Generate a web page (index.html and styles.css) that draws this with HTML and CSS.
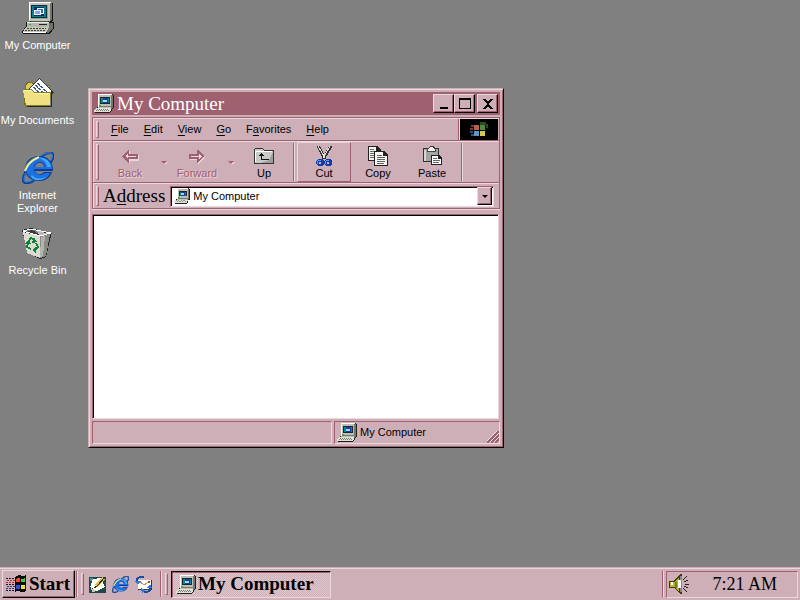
FILE: index.html
```html
<!DOCTYPE html>
<html lang="en">
<head>
<meta charset="utf-8">
<title>My Computer</title>
<meta name="viewport" content="width=device-width, initial-scale=1">
<link rel="stylesheet" href="styles.css">
</head>
<body>
<svg class="defs" aria-hidden="true">
  <symbol id="computer" viewBox="0 0 32 32">
    <path fill="#151714" d="M28 1h3v17l-2 2h3v6l-4 6H1l-1-2 4-6v-4h4v-1z"/>
    <path fill="#6f736b" d="M27 1h3v16l-3 3zM27 21h4v5l-4 5h-2z"/>
    <path fill="#c4c5bb" d="M7 0h21v19H7z"/>
    <path fill="#fff" d="M7 0h22v1H8v17H7z"/>
    <path fill="#9da097" d="M9 3h17v14H9z"/>
    <path fill="#062c38" d="M9 3h16v13H9z"/>
    <path fill="#0c7f88" d="M10 4h14v11H10z"/>
    <path fill="#0b2d6c" d="M12 5h10v9H12z"/>
    <path fill="#f3f6ff" d="M15 6h7v6h-7z"/>
    <path fill="#3c65c0" d="M16 7h5v4h-5z"/>
    <path fill="#f3f6ff" d="M12 8h7v5h-7z"/>
    <path fill="#7ba6e6" d="M13 9h5v3h-5z"/>
    <path fill="#4d514a" d="M9 19h17v1H9z"/>
    <path fill="#b4b6ac" d="M5 20h22v5H5z"/>
    <path fill="#eceee4" d="M5 20h22v1H5z"/>
    <path fill="#18b84a" d="M7 22h2v1H7z"/>
    <path fill="#222" d="M17 22h8v1h-8z"/>
    <path fill="#c8c9be" d="M4 25h23l-3 6H1v-1z"/>
    <path stroke="#3e423b" stroke-dasharray="2 1" d="M5 26.5h19M3 28.5h20"/>
    <path stroke="#fff" d="M1 30.5h23"/>
  </symbol>
  <symbol id="computer-small" viewBox="0 0 20 19">
    <path fill="#1d201b" d="M18 0h1l1 2v12l-2 1v1l-2 3H1l-1-1v-2l3-3z"/>
    <path fill="#73776e" d="M17 1h2v12l-2 2z"/>
    <path fill="#bdbfb4" d="M4 0h13v14H4z"/>
    <path fill="#fff" d="M4 0h14v1H5v12H4z"/>
    <path fill="#20252b" d="M6 3h10v7H6z"/>
    <path fill="#0a8790" d="M7 4h8v5H7z"/>
    <path fill="#173d9f" d="M9 4h5v5H9z"/>
    <path fill="#9edcf2" d="M9 6h4v2H9z"/>
    <path fill="#777b73" d="M5 12h12v1H5z"/>
    <path fill="#22b64e" d="M5 11h2v1H5z"/>
    <path fill="#e2e3d8" d="M2 14h15v2l-1 2H0v-2z"/>
    <path stroke="#777b72" stroke-dasharray="1 1" d="M3 15.5h12M2 16.5h13"/>
  </symbol>
  <symbol id="documents" viewBox="0 0 32 32">
    <path fill="#746f1b" d="M3 8l2-3h6l2 3h15v22H5l-3-2z"/>
    <path fill="#d6cd5a" d="M4 8l2-2h4l2 3h15v7H4z"/>
    <path fill="#303733" d="M7 12L17 1l15 14-8 10z"/>
    <path fill="#fff" d="M7 12L17 2l13 13-6 9z"/>
    <path fill="none" stroke="#315b95" stroke-width="1.5" stroke-dasharray="3 1" d="M12 10l6 7M14 8l8 9M16 6l9 10"/>
    <path fill="#26291d" d="M29 14h1v16H5v-1h24z"/>
    <path fill="#807c27" d="M1 12h9l2 3h17l-1 14H4z"/>
    <path fill="#eee17e" d="M1 13h9l2 3h16v12H4z"/>
    <path fill="#fff7ad" d="M1 13h9v1H2zM12 16h15v1H12z"/>
    <path stroke="#ffd8a0" stroke-dasharray="1 2" d="M5 17.5h20M6 19.5h20M5 21.5h20M6 23.5h20M6 25.5h20"/>
  </symbol>
  <symbol id="explorer" viewBox="0 0 32 32">
    <g shape-rendering="auto">
    <path fill="none" stroke="#0f3f98" stroke-width="2.5" d="M20 4C25 0 33-1 31 6c-1 3-3 5-5 6M6 16C0 25 0 31 4 31c3 0 6-1 8-3"/>
    <path fill="none" stroke="#328ce9" stroke-width="1" d="M20 3C25 0 32-1 30 6c-1 3-3 5-5 6M6 17C1 25 1 30 4 30c3 0 6-1 8-3"/>
    <path fill="#0b3a98" fill-rule="evenodd" d="M3 17C3 9 9 4 17 4c9 0 14 6 14 15H13c1 4 7 4 9 1h8c-2 6-7 9-13 9C9 29 3 24 3 17zM13 15h9c0-5-8-6-9 0z"/>
    <path fill="#1b70e2" fill-rule="evenodd" d="M4 17C4 10 10 5 17 5c8 0 13 5 13 12H12c0 6 8 7 11 4h5c-2 5-6 7-11 7C10 28 4 24 4 17zM12 15h11c-1-7-10-6-11 0z"/>
    <path fill="#3fa9fc" d="M17 6c6-1 11 3 12 9h-4c0-4-3-7-8-9zM10 23c4 5 11 4 15 1-4 5-12 6-16 1z"/>
    <path fill="none" stroke="#ecebb5" stroke-width="2" d="M17 5C10 8 5 13 3 19"/>
    <path fill="none" stroke="#848b37" d="M14 5C7 8 3 13 1 20"/>
    </g>
  </symbol>
  <symbol id="recycle" viewBox="0 0 32 32">
    <path fill="#252525" d="M0 3l9-2 21 5-1 3-5 21-6 2-12-6z"/>
    <path fill="#777" d="M2 4l7-2 19 5-11 3z"/>
    <path fill="#3a3a3a" d="M5 4l5-1 9 5-3 1z"/>
    <path fill="#bbb" d="M14 3l13 4-9 2z"/>
    <path fill="#dadbd5" d="M1 5l17 4v22L5 26z"/>
    <path fill="#898b84" d="M18 9l10-2-4 22-6 2z"/>
    <path fill="#b3b4ad" d="M19 10l4-1-2 20-3 1z"/>
    <path fill="none" stroke="#fff" stroke-width="1" d="M1 4l17 5 11-3M1 4l8-2 20 4"/>
    <path fill="none" stroke="#138034" stroke-width="2" d="M6 15l3-4 4 2M14 16l2 4-3 3M9 22l-4-2 1-4"/>
    <path fill="#138034" d="M12 10l3 5-5 1zM14 19v7l-4-3zM3 17l3-4 3 4z"/>
  </symbol>
  <symbol id="flag" viewBox="0 0 22 18">
    <path fill="#0b0b0b" d="M10 2q4-3 7-1 2 1 4-1v16q-4 2-7 0-2-1-4 1z"/>
    <path fill="#f04434" d="M11 4q2-2 4-1v4q-2-1-4 0z"/>
    <path fill="#48c83b" d="M16 4q2 1 4-1v4q-2 1-4 0z"/>
    <path fill="#2a50e0" d="M11 10q2-1 4 0v4q-2-1-4 0z"/>
    <path fill="#f3de35" d="M16 10q2 1 4 0v4q-2 1-4 0z"/>
    <path stroke="#171717" stroke-width="1" stroke-dasharray="2 1" d="M1 3.5h9M1 9.5h9M1 15.5h9"/>
    <path stroke="#b3282f" stroke-dasharray="2 1" d="M2 5.5h8M1 7.5h9"/>
    <path stroke="#26328c" stroke-dasharray="2 1" d="M2 11.5h8M1 13.5h9"/>
  </symbol>
</svg>

<main class="desktop">
  <nav class="shortcuts" aria-label="Desktop">
    <a class="shortcut" href="#computer"><svg class="icon32"><use href="#computer"/></svg><span>My Computer</span></a>
    <a class="shortcut" href="#documents"><svg class="icon32"><use href="#documents"/></svg><span>My Documents</span></a>
    <a class="shortcut" href="#explorer"><svg class="icon32"><use href="#explorer"/></svg><span>Internet<br>Explorer</span></a>
    <a class="shortcut" href="#recycle"><svg class="icon32"><use href="#recycle"/></svg><span>Recycle Bin</span></a>
  </nav>

  <section class="window" aria-labelledby="window-title">
    <header class="titlebar">
      <svg class="icon-small"><use href="#computer-small"/></svg>
      <h1 id="window-title">My Computer</h1>
      <div class="controls">
        <button class="control" aria-label="Minimize"><svg viewBox="0 0 16 14"><path d="M4 10h8v2H4z"/></svg></button>
        <button class="control" aria-label="Maximize"><svg viewBox="0 0 16 14"><path fill-rule="evenodd" d="M2 1h12v11H2zM3 3v8h10V3z"/></svg></button>
        <button class="control close" aria-label="Close"><svg viewBox="0 0 16 14"><path d="M3 2h3v1h1v1h2V3h1V2h3v1h-1v1h-1v1h-1v1H9v2h1v1h1v1h1v1h1v1h-3v-1H9v-1H7v1H6v1H3v-1h1v-1h1V9h1V8h1V6H6V5H5V4H4V3H3z"/></svg></button>
      </div>
    </header>

    <div class="rebar">
      <div class="band menu-band">
        <span class="grip"></span>
        <nav class="menu" aria-label="Menu">
          <button><u>F</u>ile</button><button><u>E</u>dit</button><button><u>V</u>iew</button><button><u>G</u>o</button><button>F<u>a</u>vorites</button><button><u>H</u>elp</button>
        </nav>
        <div class="brand">
          <svg viewBox="0 0 20 16">
            <path fill="#7c3a32" d="M2 3h3v2H2zM1 6h3v2H1z"/><path fill="#334e7b" d="M1 9h3v2H1zM2 12h3v2H2z"/>
            <path fill="#2c4a2a" d="M11 0h6v2h2v4h-2V3h-6z"/>
            <path fill="#b8604c" d="M5 3q3-1 5 0v5q-3-1-5 0z"/><path fill="#4c8a43" d="M11 3q3 1 5 0v5q-3 1-5 0z"/>
            <path fill="#5c94c6" d="M5 9q3-1 5 0v5q-3-1-5 0z"/><path fill="#dfc44e" d="M11 9q3 1 5 0v5q-3 1-5 0z"/>
          </svg>
        </div>
      </div>

      <div class="band tool-band">
        <span class="grip"></span>
        <div class="tools" role="toolbar" aria-label="Standard buttons">
          <button class="tool" disabled><svg viewBox="0 0 20 20"><path fill="#e9d8dd" d="M3 11l7-6v4h9v6h-9v3z"/><path fill="#9f6070" fill-rule="evenodd" d="M2 10l6-6h1v4h9v5H9v4H8zM5 10l3 3v-2h8v-1H8V8z"/></svg><span>Back</span></button>
          <button class="drop" disabled aria-label="Back history"></button>
          <button class="tool" disabled><svg viewBox="0 0 20 20"><path fill="#e9d8dd" d="M3 9h8V5l7 6-7 7v-4H3z"/><path fill="#9f6070" fill-rule="evenodd" d="M2 8h8V4h1l6 6-6 7h-1v-4H2zM4 10v1h8v2l3-3-3-2v2z"/></svg><span>Forward</span></button>
          <button class="drop" disabled aria-label="Forward history"></button>
          <button class="tool"><svg viewBox="0 0 20 20"><path fill="#333" d="M0 3l1-1h8l1 2h10v14H0z"/><path fill="#c9cac7" d="M1 3h8l1 2h9v12H1z"/><path fill="#fff" d="M1 5h17v1H2v10H1z"/><path fill="#9c9e9b" d="M19 6v11H6l9-3z"/><path fill="#111" d="M7 7h1v1h1v1h1v1H8v3h7v1H7v-4H5V9h1V8h1z"/></svg><span>Up</span></button>
          <span class="divider"></span>
          <button class="tool raised"><svg viewBox="0 0 20 20"><path stroke="#303030" stroke-width="3" d="M4 0l7 13M17 0L9 13"/><path stroke="#e4e4e4" stroke-width="1" d="M4 0l7 12M16 0L9 12"/><path fill="#123caa" d="M4 13h4l2 2 2-2h4l2 2v3l-2 2h-4l-2-2-2 2H4l-2-2v-3z"/><path fill="#4f9aff" d="M4 14h3v1H4v3H3v-3zM12 14h3v1h-3v3h-1v-3z"/><path fill="#cfafb7" d="M5 16h2v2H5zM13 16h2v2h-2z"/></svg><span>Cut</span></button>
          <button class="tool"><svg viewBox="0 0 20 20"><path fill="#222" d="M0 0h9l4 4v11H0z"/><path fill="#f2f2ee" d="M1 1h7v4h4v9H1z"/><path stroke="#666" d="M2 3.5h4M2 5.5h5M2 7.5h5M2 9.5h5M2 11.5h5"/><path fill="#222" d="M6 5h10l4 4v11H6z"/><path fill="#f7f7f1" d="M7 6h8v4h4v9H7z"/><path stroke="#626262" d="M9 9.5h5M9 11.5h8M9 13.5h8M9 15.5h8M9 17.5h7"/></svg><span>Copy</span></button>
          <button class="tool"><svg viewBox="0 0 20 20"><path fill="#333" d="M1 2h5l2-2h3l2 2h4v14H1z"/><path fill="#a3a5a2" d="M2 3h14v12H2z"/><path fill="#444" d="M5 2h9v4H5z"/><path fill="#f2f2ed" d="M6 3h1l1-2h3l1 2h1v2H6z"/><path fill="#d6d7d3" d="M2 4h2v11H2z"/><path fill="#222" d="M9 9h8l3 3v7H9z"/><path fill="#fff" d="M10 10h6v3h3v5h-9z"/><path stroke="#666" d="M11 12.5h4M11 14.5h7M11 16.5h6"/></svg><span>Paste</span></button>
          <span class="divider"></span>
        </div>
      </div>

      <div class="band address-band">
        <span class="grip"></span>
        <label for="address">A<u>d</u>dress</label>
        <div class="combo">
          <svg class="icon-combo"><use href="#computer-small"/></svg>
          <select id="address"><option>My Computer</option></select>
          <span class="combo-arrow"></span>
        </div>
      </div>
    </div>

    <div class="content"></div>

    <footer class="status">
      <div class="pane"></div>
      <div class="pane location"><svg class="icon-small"><use href="#computer-small"/></svg><span>My Computer</span>
        <svg class="sizer" viewBox="0 0 12 12"><path stroke="#9f6070" stroke-width="2" d="M0 12L12 0M4 12l8-8M8 12l4-4"/><path stroke="#f1e4e8" d="M-1 11L11-1M3 11l9-9M7 11l5-5"/></svg>
      </div>
    </footer>
  </section>
</main>

<footer class="taskbar">
  <button class="start"><svg viewBox="0 0 22 18"><use href="#flag"/></svg>Start</button>
  <span class="divider"></span><span class="grip"></span>
  <div class="quick">
    <button aria-label="Show desktop"><svg viewBox="0 0 17 17"><path fill="#1b494c" d="M0 1h17v16H0z"/><path fill="#46969a" d="M1 2h3v3H1z"/><path fill="#fffef0" d="M4 3l8-1 4 9-8 4-7-4z"/><path fill="#e4bc44" d="M13 1l3 2-8 8-2-2z"/><path stroke="#292918" stroke-width="1" d="M16 1l-8 9-3 2"/><path fill="#c8c8bc" d="M2 12l6 3-5 1z"/></svg></button>
    <button aria-label="Internet Explorer"><svg><use href="#explorer"/></svg></button>
    <button aria-label="Outlook Express"><svg viewBox="0 0 17 17"><path fill="#333" d="M3 4h14v10H3z"/><path fill="#fffdf0" d="M3 4h13v9H3z"/><path fill="none" stroke="#a49c78" d="M4 5l5 4 6-4"/><path fill="#b3443b" d="M13 5h2v2h-2z"/><path fill="none" stroke="#164ba9" stroke-width="2" d="M9 1C5 0 1 2 2 6M8 15c4 2 8 0 7-4"/><path fill="#287be0" d="M0 5h6L3 9zM12 12h5l-2-4zM6 12l4 2-3 3z"/></svg></button>
  </div>
  <span class="divider"></span><span class="grip"></span>
  <button class="task"><svg class="icon-small"><use href="#computer-small"/></svg>My Computer</button>
  <span class="divider"></span>
  <div class="tray">
    <svg viewBox="0 0 22 20" aria-hidden="true"><path fill="#3a3a0b" d="M0 7h5l6-7h2v20h-2l-6-6H0z"/><path fill="#b8b427" d="M1 8h4l5-5v14l-5-4H1z"/><path fill="#888" d="M11 2h2v16h-2z"/><path fill="#fff" d="M9 6h3v8H9zM2 8h2v3H2z"/><path fill="#77770f" d="M6 8h2v6H6z"/><path stroke="#222" stroke-width="1" d="M14 6l4-4M16 10.5h4M14 14l4 4M15 8l4-2M15 12l4 2"/></svg>
    <time datetime="07:21">7:21 AM</time>
  </div>
</footer>
</body>
</html>
```
FILE: styles.css
```css
:root {
  --face: #cfafb7;
  --light: #e9d8dd;
  --shadow: #9f6070;
  --ui: 11px/13px "Liberation Sans", Arial, sans-serif;
  --title: 19px/22px "Liberation Serif", serif;
}
* { box-sizing: border-box; }
body {
  margin: 0;
  min-height: 100vh;
  display: flex;
  flex-direction: column;
  background: #808080;
  color: #000;
  font: var(--ui);
}
svg { display: block; flex: none; shape-rendering: crispEdges; }
.defs { position: absolute; width: 0; height: 0; }
button { padding: 0; border: 0; background: none; color: inherit; font: inherit; }
u { text-underline-offset: 2px; text-decoration-thickness: 1px; }

/* Desktop */
.desktop { position: relative; flex: 1; }
.shortcuts { display: grid; grid-template-columns: 75px; grid-auto-rows: 75px; padding-top: 2px; }
.shortcut { display: flex; flex-direction: column; align-items: center; gap: 5px; color: #fff; text-align: center; text-decoration: none; white-space: nowrap; }
.icon32 { width: 32px; height: 32px; }
.icon-small { width: 20px; height: 19px; }

/* Window */
.window {
  position: absolute;
  left: 88px;
  top: 88px;
  width: min(416px, calc(100vw - 96px));
  display: flex;
  flex-direction: column;
  padding: 3px;
  background: var(--face);
  border: 1px solid;
  border-color: var(--face) #000 #000 var(--face);
  box-shadow: inset 1px 1px var(--light), inset -1px -1px var(--shadow);
}
.titlebar { display: flex; align-items: center; gap: 3px; height: 23px; padding: 0 2px; background: var(--shadow); color: #fff; }
.titlebar h1 { flex: 1; margin: 0; font: var(--title); }
.controls { display: flex; }
.control {
  width: 21px;
  height: 19px;
  display: grid;
  place-items: center;
  background: var(--face);
  border: 1px solid;
  border-color: var(--light) #000 #000 var(--light);
  box-shadow: inset -1px -1px var(--shadow);
}
.control svg { width: 16px; height: 14px; }
.close { margin-left: 2px; }

/* Menu, tool and address bands */
.rebar { margin-top: 2px; border: 1px solid var(--shadow); box-shadow: 0 1px var(--light), inset 1px 0 var(--light); }
.band { display: flex; align-items: center; padding-left: 3px; border-top: 1px solid var(--light); }
.band + .band { box-shadow: 0 -1px var(--shadow); margin-top: 1px; }
.grip { align-self: stretch; width: 3px; margin: 2px 0; border: 1px solid; border-color: var(--light) var(--shadow) var(--shadow) var(--light); }
.menu-band { height: 22px; padding-right: 1px; }
.menu { display: flex; flex: 1; gap: 15px; padding-left: 12px; }
.brand { align-self: stretch; width: 38px; display: grid; place-items: center; background: #000; box-shadow: -1px 0 var(--light), -2px 0 var(--shadow); }
.brand svg { width: 20px; height: 16px; }

.tool-band { height: 41px; }
.tools { display: flex; align-self: stretch; padding-left: 4px; }
.tool { width: 54px; display: flex; flex-direction: column; align-items: center; justify-content: center; gap: 1px; padding-top: 1px; border: 1px solid transparent; }
.tool svg { width: 20px; height: 20px; }
.tool:disabled { color: var(--shadow); text-shadow: 1px 1px var(--light); }
.raised { border-color: var(--light) var(--shadow) var(--shadow) var(--light); }
.drop { width: 13px; display: grid; place-items: center; }
.drop::before { content: ""; border: 3px solid transparent; border-top-color: var(--shadow); border-bottom: 0; filter: drop-shadow(1px 1px var(--light)); }
.divider { align-self: stretch; width: 2px; margin: 1px 2px; background: linear-gradient(90deg, var(--shadow) 50%, var(--light) 50%); }

.address-band { height: 25px; padding-right: 5px; }
.address-band label { padding: 0 5px 0 4px; font: var(--title); }
.combo { flex: 1; height: 21px; display: flex; align-items: center; padding: 0 1px 0 3px; background: #fff; border: 1px solid; border-color: var(--shadow) var(--light) var(--light) var(--shadow); box-shadow: inset 1px 1px #000; }
.icon-combo { width: 16px; height: 16px; }
.combo select { flex: 1; min-width: 0; appearance: none; padding: 0 3px; border: 0; background: none; color: #000; font: var(--ui); }
.combo-arrow { width: 15px; height: 18px; display: grid; place-items: center; background: var(--face); border: 1px solid; border-color: var(--light) #000 #000 var(--light); box-shadow: inset -1px -1px var(--shadow); }
.combo-arrow::before { content: ""; border: 3px solid transparent; border-top-color: #000; border-bottom: 0; }

.content { height: 205px; margin: 5px 1px 0 0; background: #fff; border: 1px solid; border-color: var(--shadow) var(--light) var(--light) var(--shadow); box-shadow: inset 1px 1px #000; }
.status { display: grid; grid-template-columns: 240fr 166fr; gap: 2px; margin-top: 2px; }
.pane { height: 23px; border: 1px solid; border-color: var(--shadow) var(--light) var(--light) var(--shadow); }
.location { display: flex; align-items: center; gap: 3px; padding-left: 2px; }
.sizer { width: 12px; height: 12px; margin-left: auto; align-self: flex-end; }

/* Taskbar */
.taskbar { display: flex; align-items: center; height: 33px; padding: 3px 2px 2px; background: var(--face); box-shadow: inset 0 1px var(--face), inset 0 2px var(--light); }
.start { height: 28px; width: 73px; display: flex; align-items: center; justify-content: center; gap: 2px; padding-right: 2px; font: bold var(--title); border: 1px solid; border-color: var(--light) #000 #000 var(--light); box-shadow: inset -1px -1px var(--shadow); }
.start svg { width: 22px; height: 18px; }
.taskbar .divider { margin: 1px; }
.taskbar .grip { margin: 3px 2px; }
.quick { display: flex; gap: 6px; padding: 0 7px 0 3px; }
.quick svg { width: 17px; height: 17px; }
.task { width: 160px; height: 27px; display: flex; align-items: center; gap: 2px; margin: 0 auto 0 1px; padding-left: 4px; font: bold var(--title); border: 1px solid; border-color: #000 var(--light) var(--light) #000; box-shadow: inset 1px 1px var(--shadow); background: repeating-conic-gradient(#dfc8ce 0 25%, var(--face) 0 50%) 0 0 / 2px 2px; }
.tray { display: flex; align-items: center; justify-content: space-between; width: 132px; height: 27px; margin-left: 1px; padding: 0 20px 0 2px; border: 1px solid; border-color: var(--shadow) var(--light) var(--light) var(--shadow); font: var(--title); }
.tray svg { width: 22px; height: 20px; }
.tray time { font-size: 18px; }
```
